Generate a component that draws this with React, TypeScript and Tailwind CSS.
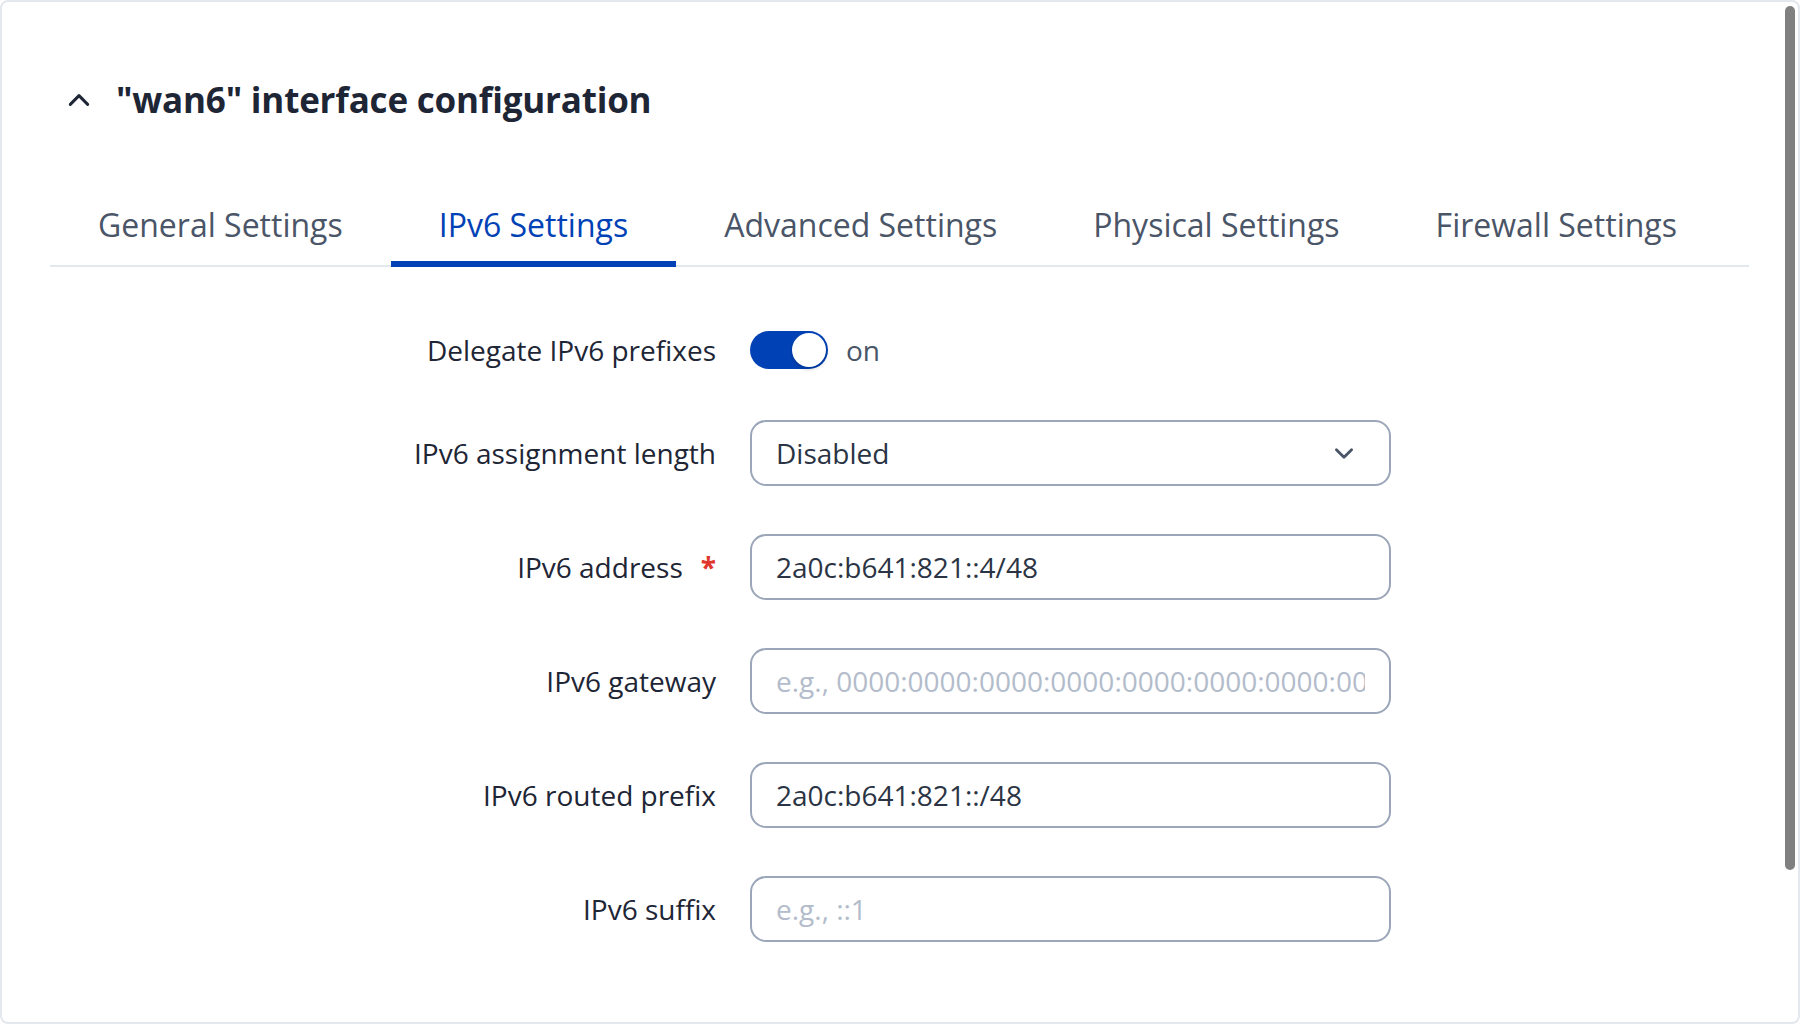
import React from 'react';

const tabs = ['General Settings', 'IPv6 Settings', 'Advanced Settings', 'Physical Settings', 'Firewall Settings'];

const Row: React.FC<{ label: string; required?: boolean; className?: string; children: React.ReactNode }> = ({
  label,
  required,
  className,
  children,
}) => {
  return (
    <div className={`flex items-center ${className ?? ''}`}>
      <div className="w-[714px] flex justify-end items-center text-[28px] text-[#1e2636]">
        <span>{label}</span>
        {required && <span className="ml-[18px] text-[#e0362c] font-bold">*</span>}
      </div>
      <div className="ml-[34px] w-[641px]">{children}</div>
    </div>
  );
};

const TextField: React.FC<{ value?: string; placeholder?: string }> = ({ value, placeholder }) => (
  <input
    readOnly
    defaultValue={value}
    placeholder={placeholder}
    className="w-full h-[66px] rounded-[16px] border-2 border-[#9ba6b9] bg-white px-[24px] text-[28px] text-[#2b3444] placeholder:text-[#b3bccb] outline-none"
  />
);

const App: React.FC = () => {
  return (
    <div className="w-[1800px] h-[1024px] bg-white font-['Open_Sans',sans-serif]">
      <div className="relative h-full rounded-lg border-2 border-[#e3e8ef] bg-white">
        <div className="mt-[76px] h-[44px] flex items-center pl-[64px]">
          <svg width="26" height="26" viewBox="0 0 24 24" fill="none" stroke="#1e2636" strokeWidth="2.8" strokeLinecap="round" strokeLinejoin="round">
            <path d="M4 16l8-8 8 8" />
          </svg>
          <h2 className="ml-[24px] text-[35px] font-bold text-[#1e2636] tracking-[-0.2px]">"wan6" interface configuration</h2>
        </div>

        <div className="mt-[81px] ml-[48px] mr-[49px] flex border-b-2 border-[#e3e8ef]">
          {tabs.map((t) => {
            const active = t === 'IPv6 Settings';
            return (
              <div
                key={t}
                className={`h-[64px] px-[48px] -mb-[2px] border-b-[6px] text-[32px] leading-[1.4] ${
                  active ? 'border-[#0042b6] text-[#0042b6]' : 'border-transparent text-[#4a5568]'
                }`}
              >
                {t}
              </div>
            );
          })}
        </div>

        <Row label="Delegate IPv6 prefixes" className="mt-[64px] h-[38px]">
          <div className="flex items-center">
            <div className="w-[78px] h-[38px] rounded-full bg-[#0042b6] flex items-center justify-end pr-[2px]">
              <div className="w-[34px] h-[34px] rounded-full bg-white shadow-[0_2px_4px_rgba(0,0,0,0.2)]" />
            </div>
            <span className="ml-[18px] text-[28px] text-[#4a5568]">on</span>
          </div>
        </Row>

        <Row label="IPv6 assignment length" className="mt-[51px]">
          <div className="w-full h-[66px] rounded-[16px] border-2 border-[#9ba6b9] bg-white pl-[24px] pr-[32px] flex items-center justify-between text-[28px] text-[#2b3444]">
            <span>Disabled</span>
            <svg width="26" height="26" viewBox="0 0 24 24" fill="none" stroke="#4a5568" strokeWidth="2.6" strokeLinecap="round" strokeLinejoin="round">
              <path d="M5 9l7 7 7-7" />
            </svg>
          </div>
        </Row>

        <Row label="IPv6 address" required className="mt-[48px]">
          <TextField value="2a0c:b641:821::4/48" />
        </Row>

        <Row label="IPv6 gateway" className="mt-[48px]">
          <TextField placeholder="e.g., 0000:0000:0000:0000:0000:0000:0000:0000" />
        </Row>

        <Row label="IPv6 routed prefix" className="mt-[48px]">
          <TextField value="2a0c:b641:821::/48" />
        </Row>

        <Row label="IPv6 suffix" className="mt-[48px]">
          <TextField placeholder="e.g., ::1" />
        </Row>

        <div className="absolute top-[4px] right-[3px] w-[10px] h-[864px] rounded-full bg-[#808080]" />
      </div>
    </div>
  );
};

export default App;
